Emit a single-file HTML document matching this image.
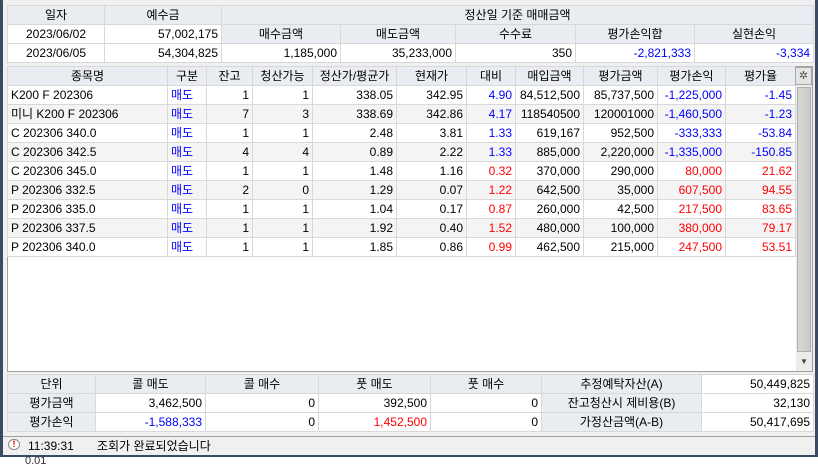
<!DOCTYPE html>
<html><head><meta charset="utf-8"><style>
*{margin:0;padding:0;box-sizing:border-box}
body{width:818px;height:463px;overflow:hidden;background:#fff;font-family:"Liberation Sans","Noto Sans CJK KR","NanumGothic",sans-serif;font-size:12px;color:#000;position:relative}
.win{position:absolute;left:0;top:0;width:818px;height:457px;background:#f0f0f0;border-left:3px solid #3c4b64;border-right:3px solid #3c4b64;border-bottom:2px solid #3c4b64}
table{border-collapse:collapse;table-layout:fixed;position:absolute}
td{border:1px solid #d8d8d8;height:19px;line-height:17px;padding:0 3px;white-space:nowrap;overflow:hidden}
.h td,td.h{background:#e9ecf0;text-align:center}
.r{text-align:right}.b{color:#0000ff}.red{color:#ff0000}.c{text-align:center}
.g td{background:#f4f4f4}
.w td{background:#fff}
</style></head><body>
<div class="win"></div>
<table style="left:7px;top:5px;width:806px;border:1px solid #a0a0a0">
<colgroup><col style="width:97px"><col style="width:117px"><col style="width:119px"><col style="width:115px"><col style="width:120px"><col style="width:119px"><col style="width:119px"></colgroup>
<tr class="h"><td>일자</td><td>예수금</td><td colspan="5">정산일 기준 매매금액</td></tr>
<tr><td class="c" style="background:#fff">2023/06/02</td><td class="r" style="background:#fff">57,002,175</td><td class="h">매수금액</td><td class="h">매도금액</td><td class="h">수수료</td><td class="h">평가손익합</td><td class="h">실현손익</td></tr>
<tr style="background:#fff"><td class="c">2023/06/05</td><td class="r">54,304,825</td><td class="r">1,185,000</td><td class="r">35,233,000</td><td class="r">350</td><td class="r b">-2,821,333</td><td class="r b">-3,334</td></tr>
</table>
<div style="position:absolute;left:7px;top:66px;width:806px;height:306px;background:#fff;border:1px solid #a0a0a0"></div>
<table style="left:7px;top:66px;width:788px">
<colgroup><col style="width:160px"><col style="width:39px"><col style="width:46px"><col style="width:60px"><col style="width:84px"><col style="width:70px"><col style="width:49px"><col style="width:68px"><col style="width:74px"><col style="width:68px"><col style="width:70px"></colgroup>
<tr class="h"><td>종목명</td><td>구분</td><td>잔고</td><td>청산가능</td><td>정산가/평균가</td><td>현재가</td><td>대비</td><td>매입금액</td><td>평가금액</td><td>평가손익</td><td>평가율</td></tr>
<tr class="w"><td>K200 F 202306</td><td class="b">매도</td><td class="r">1</td><td class="r">1</td><td class="r">338.05</td><td class="r">342.95</td><td class="r b">4.90</td><td class="r">84,512,500</td><td class="r">85,737,500</td><td class="r b">-1,225,000</td><td class="r b">-1.45</td></tr>
<tr class="g"><td>미니 K200 F 202306</td><td class="b">매도</td><td class="r">7</td><td class="r">3</td><td class="r">338.69</td><td class="r">342.86</td><td class="r b">4.17</td><td class="r">118540500</td><td class="r">120001000</td><td class="r b">-1,460,500</td><td class="r b">-1.23</td></tr>
<tr class="w"><td>C 202306 340.0</td><td class="b">매도</td><td class="r">1</td><td class="r">1</td><td class="r">2.48</td><td class="r">3.81</td><td class="r b">1.33</td><td class="r">619,167</td><td class="r">952,500</td><td class="r b">-333,333</td><td class="r b">-53.84</td></tr>
<tr class="g"><td>C 202306 342.5</td><td class="b">매도</td><td class="r">4</td><td class="r">4</td><td class="r">0.89</td><td class="r">2.22</td><td class="r b">1.33</td><td class="r">885,000</td><td class="r">2,220,000</td><td class="r b">-1,335,000</td><td class="r b">-150.85</td></tr>
<tr class="w"><td>C 202306 345.0</td><td class="b">매도</td><td class="r">1</td><td class="r">1</td><td class="r">1.48</td><td class="r">1.16</td><td class="r red">0.32</td><td class="r">370,000</td><td class="r">290,000</td><td class="r red">80,000</td><td class="r red">21.62</td></tr>
<tr class="g"><td>P 202306 332.5</td><td class="b">매도</td><td class="r">2</td><td class="r">0</td><td class="r">1.29</td><td class="r">0.07</td><td class="r red">1.22</td><td class="r">642,500</td><td class="r">35,000</td><td class="r red">607,500</td><td class="r red">94.55</td></tr>
<tr class="w"><td>P 202306 335.0</td><td class="b">매도</td><td class="r">1</td><td class="r">1</td><td class="r">1.04</td><td class="r">0.17</td><td class="r red">0.87</td><td class="r">260,000</td><td class="r">42,500</td><td class="r red">217,500</td><td class="r red">83.65</td></tr>
<tr class="g"><td>P 202306 337.5</td><td class="b">매도</td><td class="r">1</td><td class="r">1</td><td class="r">1.92</td><td class="r">0.40</td><td class="r red">1.52</td><td class="r">480,000</td><td class="r">100,000</td><td class="r red">380,000</td><td class="r red">79.17</td></tr>
<tr class="w"><td>P 202306 340.0</td><td class="b">매도</td><td class="r">1</td><td class="r">1</td><td class="r">1.85</td><td class="r">0.86</td><td class="r red">0.99</td><td class="r">462,500</td><td class="r">215,000</td><td class="r red">247,500</td><td class="r red">53.51</td></tr>
</table>
<div style="position:absolute;left:795px;top:67px;width:17px;height:18px;background:#e4e4e4;border:1px solid #a8a8a8;text-align:center;line-height:16px;font-size:11px;color:#555">✲</div>
<div style="position:absolute;left:796px;top:85px;width:16px;height:286px;background:#ececec"></div>
<div style="position:absolute;left:797px;top:87px;width:14px;height:265px;background:linear-gradient(90deg,#d8d8d8,#c8c8c8);border:1px solid #b0b0b0"></div>
<div style="position:absolute;left:796px;top:354px;width:16px;height:16px;text-align:center;font-size:8px;line-height:16px;color:#444">▼</div>
<table style="left:7px;top:374px;width:806px;border:1px solid #a0a0a0">
<colgroup><col style="width:88px"><col style="width:110px"><col style="width:113px"><col style="width:112px"><col style="width:111px"><col style="width:160px"><col style="width:112px"></colgroup>
<tr><td class="h">단위</td><td class="h">콜 매도</td><td class="h">콜 매수</td><td class="h">풋 매도</td><td class="h">풋 매수</td><td class="h">추정예탁자산(A)</td><td class="r" style="background:#fff">50,449,825</td></tr>
<tr><td class="h">평가금액</td><td class="r" style="background:#fff">3,462,500</td><td class="r" style="background:#fff">0</td><td class="r" style="background:#fff">392,500</td><td class="r" style="background:#fff">0</td><td class="h">잔고청산시 제비용(B)</td><td class="r" style="background:#fff">32,130</td></tr>
<tr><td class="h">평가손익</td><td class="r b" style="background:#fff">-1,588,333</td><td class="r" style="background:#fff">0</td><td class="r red" style="background:#fff">1,452,500</td><td class="r" style="background:#fff">0</td><td class="h">가정산금액(A-B)</td><td class="r" style="background:#fff">50,417,695</td></tr>
</table>
<div style="position:absolute;left:3px;top:436px;width:812px;height:1px;background:#a0a0a0"></div>
<div style="position:absolute;left:8px;top:439px;width:12px;height:11px;border:1px solid #888;border-radius:6px;background:#fff;color:#e00;font-size:9px;line-height:9px;text-align:center;font-weight:bold">!</div>
<div style="position:absolute;left:28px;top:437px;line-height:18px">11:39:31</div>
<div style="position:absolute;left:97px;top:437px;line-height:18px">조회가 완료되었습니다</div>
<div style="position:absolute;left:0;top:458px;font-size:11px;line-height:6px;color:#333;left:25px">0.01</div>
</body></html>
